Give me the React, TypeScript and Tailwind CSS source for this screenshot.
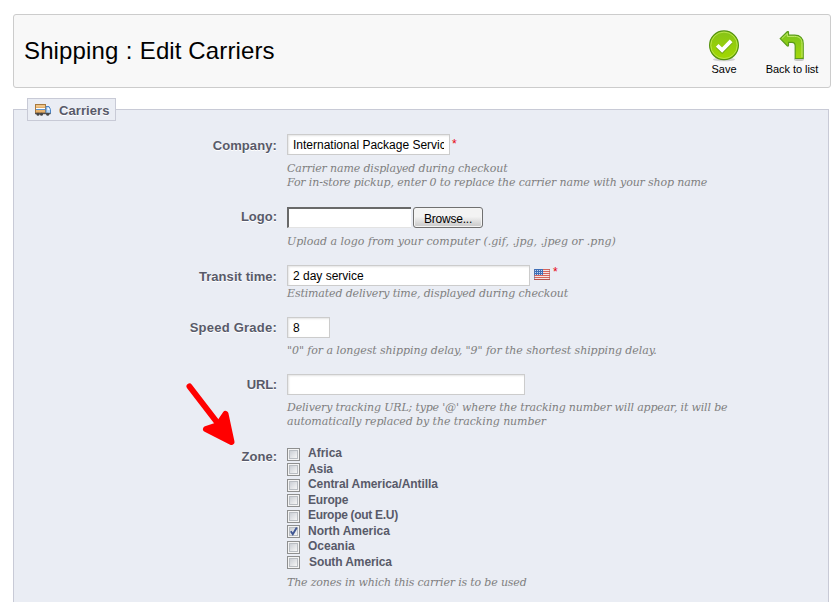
import type { ReactNode } from "react";

const zones = [
  { name: "Africa", style: "ml-[8px]" },
  { name: "Asia", style: "ml-[8px] tracking-[-0.1px]" },
  { name: "Central America/Antilla", style: "ml-[8px] tracking-[-0.08px]" },
  { name: "Europe", style: "ml-[8px] tracking-[-0.2px]" },
  { name: "Europe (out E.U)", style: "ml-[8px] tracking-[-0.3px]" },
  { name: "North America", style: "ml-[8px] tracking-[-0.03px]", checked: true },
  { name: "Oceania", style: "ml-[8px]" },
  { name: "South America", style: "ml-[9px] tracking-[-0.1px]" },
];

function Row({ label, height, labelStyle = "pt-[4px]", children }: { label: string; height: string; labelStyle?: string; children: ReactNode }) {
  return (
    <div className={`flex gap-[10px] ${height}`}>
      <div className={`w-[263px] shrink-0 text-right text-[13px] font-bold leading-4 text-[#585a69] [text-shadow:0_1px_0_#fff] ${labelStyle}`}>{label}</div>
      <div>{children}</div>
    </div>
  );
}

function Field({ value = "", width, label }: { value?: string; width: string; label: string }) {
  return (
    <input
      aria-label={label}
      defaultValue={value}
      className={`block h-[21px] border border-[#ccc] bg-white px-[5px] text-[12px] leading-4 text-black shadow-[inset_1px_1px_2px_#e4e4e4] outline-none ${width}`}
    />
  );
}

function Hint({ children, className = "" }: { children: ReactNode; className?: string }) {
  return (
    <div className={`whitespace-nowrap pt-px font-['DejaVu_Serif',serif] text-[11px] italic leading-[14px] text-[#7f7f7f] ${className}`}>
      {children}
    </div>
  );
}

function Truck() {
  return (
    <svg width="16" height="16" viewBox="0 0 16 16">
      <rect x="0.5" y="2.5" width="10" height="8.5" fill="#e6b06a" stroke="#a8793e" />
      <path d="M1 4h9" stroke="#f7d9a5" />
      <path d="M1 6.5h9" stroke="#fff" />
      <path d="M1 7.5h9" stroke="#5d94cf" />
      <path d="M11 4.500h3l1.500 3v4H11z" fill="#b9d7f5" stroke="#4d86c8" />
      <path d="M12.500 6h1.500l.6 2h-2.100z" fill="#f4faff" />
      <path d="M0 11.500h15.500" stroke="#54504d" strokeWidth="1.400" />
      <circle cx="3" cy="12.200" r="1.500" fill="#444" />
      <circle cx="6.500" cy="12.200" r="1.500" fill="#444" />
      <circle cx="12.700" cy="12.200" r="1.500" fill="#444" />
    </svg>
  );
}

function SaveIcon() {
  return (
    <svg width="32" height="32" viewBox="0 0 32 32">
      <defs>
        <linearGradient id="save" x1="0" y1="0" x2="0" y2="1">
          <stop offset="0" stopColor="#86c318" />
          <stop offset="1" stopColor="#a3d900" />
        </linearGradient>
      </defs>
      <ellipse cx="16" cy="29.5" rx="11" ry="1.8" fill="#000" opacity=".16" />
      <circle cx="16" cy="15.3" r="14.4" fill="url(#save)" stroke="#55920f" strokeWidth="1.2" />
      <circle cx="16" cy="15.3" r="13.2" fill="none" stroke="#b9e34b" strokeWidth="1" />
      <path d="M9.2 16.4l4.9 4.700 9-9.200" fill="none" stroke="#6fa60e" strokeWidth="4" />
      <path d="M9.200 15.400l4.900 4.700 9-9.200" fill="none" stroke="#fff" strokeWidth="3.800" />
    </svg>
  );
}

function BackIcon() {
  return (
    <svg width="32" height="32" viewBox="0 0 32 32">
      <defs>
        <linearGradient id="back" x1="0" y1="0" x2="0" y2="1">
          <stop offset="0" stopColor="#78c31f" />
          <stop offset="1" stopColor="#a5d80b" />
        </linearGradient>
      </defs>
      <ellipse cx="23" cy="29.400" rx="5" ry="1.600" fill="#000" opacity=".2" />
      <path d="M4.200 8.600l7-6.800c.8-.5 1.300-.2 1.300.6v2.800h6.200c5.500 0 8.500 3.200 8.500 8.200v15.100h-8V16c0-2.500-.9-3.700-3.200-3.700h-3.500v2.900c0 .9-.6 1.100-1.300.5z" fill="url(#back)" stroke="#5a9b18" strokeWidth="1.200" />
      <path d="M5.800 8.600l5.500-5.200v3h7.400c4.800 0 7.300 2.700 7.300 7v13.900" fill="none" stroke="#c3e86b" strokeWidth="1" />
    </svg>
  );
}

function Flag() {
  return (
    <svg width="16" height="11" viewBox="0 0 16 11" shapeRendering="crispEdges">
      <rect width="16" height="11" fill="#f6e4e2" />
      {[0, 2, 4, 6, 8, 10].map((y) => (
        <rect key={y} y={y} width="16" height="1" fill="#d5645c" />
      ))}
      <rect width="9" height="6" fill="#3f6fb8" />
      {[1, 3, 5].map((y) =>
        [1, 3, 5, 7].map((x) => <rect key={`${x}-${y}`} x={x} y={y} width="1" height="1" fill="#c3d7f0" />),
      )}
      <rect x="0" y="0" width="1" height="11" fill="#5b74a8" opacity=".6" />
      <rect x="15" y="0" width="1" height="11" fill="#b95b56" opacity=".6" />
      <rect x="0" y="10" width="16" height="1" fill="#b4534c" />
    </svg>
  );
}

function Checkbox({ checked }: { checked?: boolean }) {
  return (
    <span role="checkbox" aria-checked={!!checked} className="block size-[13px] shrink-0 border border-[#8e8f8f] bg-[#f4f4f4] p-px">
      <span className="block size-[9px] border border-[#b9bdc2] bg-linear-to-br from-[#cbcfd5] to-[#f6f6f6]">
        {checked && (
          <svg className="-mt-px block overflow-visible" width="8" height="8" viewBox="0 0 8 8">
            <path d="M.8 4.200l2 3L6.800.6" fill="none" stroke="#3f5693" strokeWidth="1.900" />
          </svg>
        )}
      </span>
    </span>
  );
}

export default function App() {
  return (
    <div className="relative h-[602px] w-[835px] overflow-hidden bg-white pl-[13px] pt-[14px] font-['Liberation_Sans',Arial,sans-serif]">
      <header className="flex h-[74px] w-[818px] justify-between rounded-[3px] border border-[#ccc] bg-[#f8f8f8]">
        <h1 className="pl-[10px] pt-[21px] text-[24px] leading-[30px] tracking-[0.12px] text-black">
          Shipping<span className="mx-[0.5px]"> : </span>Edit Carriers
        </h1>
        <div className="flex pr-[11px] pt-[15px] text-[11px] leading-[14px] text-black">
          <div className="flex w-[32px] flex-col items-center">
            <SaveIcon />
            <span>Save</span>
          </div>
          <div className="ml-[25px] flex w-[54px] flex-col items-center whitespace-nowrap">
            <BackIcon />
            <span className="tracking-[-0.05px]">Back to list</span>
          </div>
        </div>
      </header>

      <section className="mt-[21px] h-[520px] w-[816px] border border-[#c8cad6] bg-[#eaedf4]">
        <div className="-mt-[12px] ml-[13px] flex h-[23px] w-[89px] items-center border border-[#c8cad6] bg-[#eaedf4] pl-[7px] text-[13px] font-bold text-[#585a69]">
          <Truck />
          <span className="ml-[8px] pt-[3px] tracking-[0.08px] [text-shadow:0_1px_0_#fff]">Carriers</span>
        </div>

        <div className="mt-[13px]">
          <Row label="Company:" height="h-[72px]" labelStyle="pt-[4px] tracking-[0.1px]">
            <div className="flex">
              <Field label="Company" value="International Package Services" width="w-[163px]" />
              <span className="ml-[2px] mt-[4px] text-[12px] leading-3 text-red-600">*</span>
            </div>
            <Hint className="mt-[6px]">
              <div className="tracking-[-0.15px]">Carrier name displayed during checkout</div>
              <div className="tracking-[-0.145px]">For in-store pickup, enter 0 to replace the carrier name with your shop name</div>
            </Hint>
          </Row>
          <Row label="Logo:" height="h-[59px]" labelStyle="pt-[3px]">
            <div className="flex pt-px">
              <div className="h-[21px] w-[124px] border-b border-l-2 border-t-2 border-b-[#e3e3e3] border-l-[#696969] border-t-[#696969] bg-white" />
              <button className="ml-[2px] h-[21px] w-[70px] rounded-[3px] border border-[#707070] bg-linear-to-b from-[#f3f3f3] from-45% to-[#cfcfcf] to-90% text-[12px] leading-[19px] tracking-[-0.2px] text-black shadow-[inset_0_0_0_1px_#f4f4f4]">
                <span className="relative top-[2px]">Browse...</span>
              </button>
            </div>
            <Hint className="mt-[6px]">Upload a logo from your computer (.gif, .jpg, .jpeg or .png)</Hint>
          </Row>
          <Row label="Transit time:" height="h-[52px]" labelStyle="pt-[4px] tracking-[0.06px]">
            <div className="flex">
              <Field label="Transit time" value="2 day service" width="w-[243px]" />
              <div className="ml-[4px] mt-[4px]"><Flag /></div>
              <span className="ml-[3px] mt-[1px] text-[12px] leading-3 text-red-600">*</span>
            </div>
            <Hint className="tracking-[-0.14px]">Estimated delivery time, displayed during checkout</Hint>
          </Row>
          <Row label="Speed Grade:" height="h-[57px]" labelStyle="pt-[3px] tracking-[0.23px]">
            <Field label="Speed Grade" value="8" width="w-[43px]" />
            <Hint className="mt-[5px] tracking-[-0.08px]">"0" for a longest shipping delay, "9" for the shortest shipping delay.</Hint>
          </Row>
          <Row label="URL:" height="h-[74px]" labelStyle="pt-[3px] tracking-[-0.2px]">
            <Field label="URL" width="w-[238px]" />
            <Hint className="mt-[5px]">
              <div className="tracking-[-0.17px]">Delivery tracking URL; type '@' where the tracking number will appear, it will be</div>
              <div className="tracking-[-0.09px]">automatically replaced by the tracking number</div>
            </Hint>
          </Row>
          <Row label="Zone:" height="h-[150px]" labelStyle="pt-[1px]">
            <div className="-mt-[3px]">
              {zones.map((zone) => (
                <div key={zone.name} className="flex h-[15.5px]">
                  <div className="pt-[2.75px]"><Checkbox checked={zone.checked} /></div>
                  <span className={`text-[12px] font-bold leading-4 text-[#585a69] ${zone.style}`}>{zone.name}</span>
                </div>
              ))}
            </div>
            <Hint className="mt-[6px] tracking-[-0.17px]">The zones in which this carrier is to be used</Hint>
          </Row>
        </div>
      </section>

      <svg className="pointer-events-none absolute left-[180px] top-[376px]" width="64" height="76" viewBox="0 0 64 76">
        <path d="M9.500 10.500l30 39" stroke="#f00" strokeWidth="6" strokeLinecap="round" />
        <path d="M45.500 38L51.500 66 26 53 38 49z" fill="#f00" stroke="#f00" strokeWidth="6" strokeLinejoin="round" />
      </svg>
    </div>
  );
}
